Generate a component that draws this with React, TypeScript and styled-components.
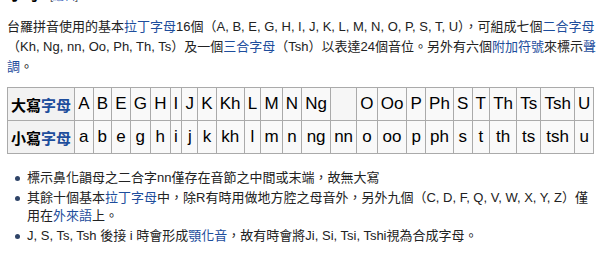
import styled, { createGlobalStyle } from 'styled-components'

const GlobalStyle = createGlobalStyle`
  html, body {
    margin: 0;
    padding: 0;
    background: #fff;
  }
  body {
    font-family: 'Liberation Sans', 'Noto Sans CJK TC', sans-serif;
    color: #222;
    overflow: hidden;
  }
`

const Page = styled.div`
  width: 600px;
  height: 257px;
  overflow: hidden;
  padding: 0 1px 0 7px;
  box-sizing: border-box;
`

const SectionHeading = styled.h3`
  margin: -15px 0 0 1px;
  font-size: 16px;
  line-height: 20px;
  font-weight: bold;
  color: #000;
  display: flex;
  align-items: baseline;
  gap: 10px;
`

const EditLink = styled.span`
  font-size: 11px;
  font-weight: normal;
  color: #555;

  a {
    color: #0645ad;
    text-decoration: none;
  }
`

const Paragraph = styled.p`
  margin: 11px 0 0;
  font-size: 13px;
  line-height: 20px;
`

const Link = styled.a`
  color: #1d4d9c;
  text-decoration: none;
`

const LetterTable = styled.table`
  margin-top: 10px;
  border-collapse: collapse;
  border: 1px solid #aaa;
  background: #f9f9f9;
  color: #000;
`

const RowHead = styled.th`
  border: 1px solid #aaa;
  background: #f2f2f2;
  padding: 0 3px;
  height: 32px;
  font-size: 15px;
  font-weight: bold;
  text-align: center;
  white-space: nowrap;
`

const Cell = styled.td<{ $empty?: boolean }>`
  border: 1px solid #aaa;
  padding: 0 3.1px;
  height: 32px;
  font-size: 17px;
  text-align: center;
  white-space: nowrap;
  background: ${(p) => (p.$empty ? '#f6f6f6' : '#f9f9f9')};
`

const Notes = styled.ul`
  list-style: none;
  margin: 15px 0 0;
  padding: 0 0 0 20px;
  font-size: 13px;
  line-height: 18px;
`

const Note = styled.li`
  position: relative;
  margin-bottom: 2px;

  &::before {
    content: '';
    position: absolute;
    left: -12px;
    top: 7px;
    width: 5px;
    height: 5px;
    border-radius: 50%;
    background: #2f4468;
  }
`

const upper = ['A', 'B', 'E', 'G', 'H', 'I', 'J', 'K', 'Kh', 'L', 'M', 'N', 'Ng', '', 'O', 'Oo', 'P', 'Ph', 'S', 'T', 'Th', 'Ts', 'Tsh', 'U']
const lower = ['a', 'b', 'e', 'g', 'h', 'i', 'j', 'k', 'kh', 'l', 'm', 'n', 'ng', 'nn', 'o', 'oo', 'p', 'ph', 's', 't', 'th', 'ts', 'tsh', 'u']

export default function App() {
  return (
    <Page>
      <GlobalStyle />
      <SectionHeading>
        字母
        <EditLink>
          [<a href="#">編輯</a>]
        </EditLink>
      </SectionHeading>

      <Paragraph>
        台羅拼音使用的基本<Link href="#">拉丁字母</Link>16個（A, B, E, G, H, I, J, K, L, M, N, O, P, S, T, U），可組成七個
        <Link href="#">二合字母</Link>（Kh, Ng, nn, Oo, Ph, Th, Ts）及一個<Link href="#">三合字母</Link>
        （Tsh）以表達24個音位。另外有六個<Link href="#">附加符號</Link>來標示<Link href="#">聲調</Link>。
      </Paragraph>

      <LetterTable>
        <tbody>
          <tr>
            <RowHead>
              大寫<Link href="#">字母</Link>
            </RowHead>
            {upper.map((l, i) => (
              <Cell key={i} $empty={l === ''}>
                {l}
              </Cell>
            ))}
          </tr>
          <tr>
            <RowHead>
              小寫<Link href="#">字母</Link>
            </RowHead>
            {lower.map((l, i) => (
              <Cell key={i}>{l}</Cell>
            ))}
          </tr>
        </tbody>
      </LetterTable>

      <Notes>
        <Note>標示鼻化韻母之二合字nn僅存在音節之中間或末端，故無大寫</Note>
        <Note>
          其餘十個基本<Link href="#">拉丁字母</Link>中，除R有時用做地方腔之母音外，另外九個（C, D, F, Q, V, W, X, Y, Z）僅用在
          <Link href="#">外來語</Link>上。
        </Note>
        <Note>
          J, S, Ts, Tsh 後接 i 時會形成<Link href="#">顎化音</Link>，故有時會將Ji, Si, Tsi, Tshi視為合成字母。
        </Note>
      </Notes>
    </Page>
  )
}
